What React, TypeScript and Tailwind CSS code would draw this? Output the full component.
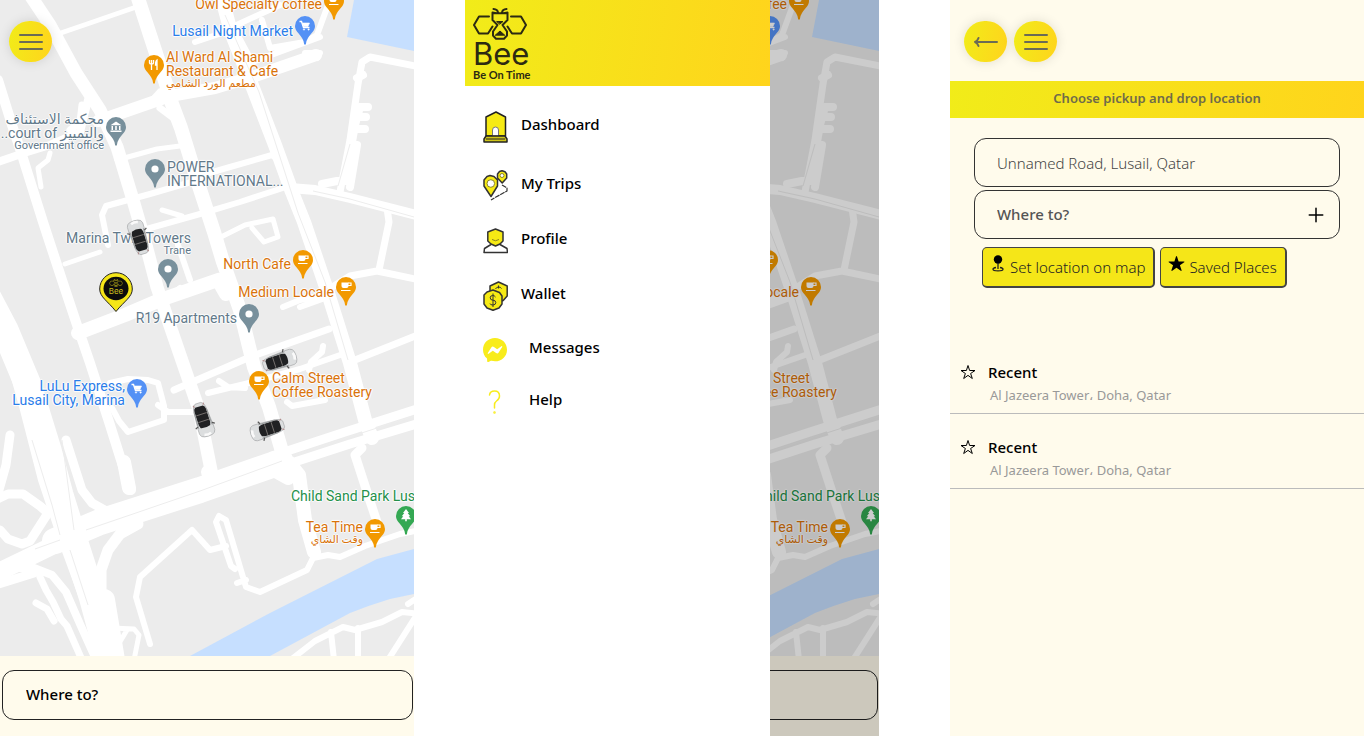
import React from "react";
import { BsMessenger } from "react-icons/bs";
import { IoAdd, IoStar, IoStarOutline } from "react-icons/io5";

const MAP_W = 414;
const MAP_H = 656;

type Glyph = "cart" | "cup" | "fork" | "bank" | "dot" | "tree";
type Line = { text: string; small?: boolean; rtl?: boolean };
type Place = {
  id: string;
  lines: Line[];
  x: number;
  y: number;
  end?: boolean;
  pin: [number, number];
  glyph: Glyph;
  tone: "orange" | "blue" | "slate" | "green";
  east?: boolean;
};

const places: Place[] = [
  { id: "owl", lines: [{ text: "Owl Specialty coffee" }], x: 322, y: -3, end: true, pin: [334, 1], glyph: "cup", tone: "orange", east: true },
  { id: "market", lines: [{ text: "Lusail Night Market" }], x: 293, y: 24, end: true, pin: [305, 26], glyph: "cart", tone: "blue", east: true },
  { id: "ward", lines: [{ text: "Al Ward Al Shami" }, { text: "Restaurant & Cafe" }, { text: "مطعم الورد الشامي", small: true, rtl: true }], x: 166, y: 50, pin: [154, 65], glyph: "fork", tone: "orange" },
  { id: "court", lines: [{ text: "محكمة الاستئناف", rtl: true }, { text: "والتمييز court of..", rtl: true }, { text: "Government office", small: true }], x: 104, y: 112, end: true, pin: [116, 127], glyph: "bank", tone: "slate" },
  { id: "power", lines: [{ text: "POWER" }, { text: "INTERNATIONAL..." }], x: 167, y: 160, pin: [155, 169], glyph: "dot", tone: "slate" },
  { id: "trane", lines: [{ text: "Marina Twin Towers" }, { text: "Trane", small: true }], x: 191, y: 231, end: true, pin: [168, 269], glyph: "dot", tone: "slate" },
  { id: "north", lines: [{ text: "North Cafe" }], x: 291, y: 257, end: true, pin: [303, 260], glyph: "cup", tone: "orange", east: true },
  { id: "medium", lines: [{ text: "Medium Locale" }], x: 334, y: 285, end: true, pin: [346, 287], glyph: "cup", tone: "orange", east: true },
  { id: "r19", lines: [{ text: "R19 Apartments" }], x: 237, y: 311, end: true, pin: [249, 314], glyph: "dot", tone: "slate" },
  { id: "lulu", lines: [{ text: "LuLu Express," }, { text: "Lusail City, Marina" }], x: 125, y: 379, end: true, pin: [137, 389], glyph: "cart", tone: "blue" },
  { id: "calm", lines: [{ text: "Calm Street" }, { text: "Coffee Roastery" }], x: 272, y: 371, pin: [259, 381], glyph: "cup", tone: "orange", east: true },
  { id: "park", lines: [{ text: "Child Sand Park Lusail" }], x: 291, y: 489, pin: [406, 516], glyph: "tree", tone: "green", east: true },
  { id: "tea", lines: [{ text: "Tea Time" }, { text: "وقت الشاي", small: true, rtl: true }], x: 363, y: 520, end: true, pin: [375, 529], glyph: "cup", tone: "orange", east: true },
];

const labelTone = {
  orange: "text-[#d9730b]",
  blue: "text-[#2b7de9]",
  slate: "text-[#62798a]",
  green: "text-[#24904a]",
};
const pinTone = { orange: "#f29900", blue: "#5491f5", slate: "#78909c", green: "#34a853" };

const roads: [number, string][] = [
  [13, "M30 -5L50 25L76 73L100 110L117 147L133 200L146 245L157 287L168 320L199 410L208 455L212 475"],
  [14, "M137 -5L150 35L168 90L172 104L181 128L197 180L214 232L223 262L240 310L254 367L269 407L283 455L299 475L305 520L314 552"],
  [14, "M221 -5L231 32L253 88L275 145L292 192L304 222L327 290L350 363L365 420L372 438"],
  [9, "M362 448L355 455L367 492L378 525"],
  [10, "M-2 80L12 125L22 155L43 222L62 280L77 325L90 363L110 425L121 460L131 490"],
  [27, "M-16 290L5 330L28 385L48 450L60 495L74 540L92 596L110 662"],
  [8, "M2 330L24 410L42 480L62 540L84 600L104 660"],
  [18, "M-8 575L50 547L100 523"],
  [26, "M55 541L100 522L200 490L275 464"],
  [9, "M270 470L350 444L420 423"],
  [9, "M272 456L345 432L420 408"],
  [5, "M52 36L90 23L142 5"],
  [12, "M98 121L147 104L170 96L215 88L255 76L316 55"],
  [6, "M195 42L237 28M230 28L280 5M235 30L252 62L320 37M262 20L270 48L305 42L317 35L328 5"],
  [6, "M305 53L320 53L317 58"],
  [8, "M-5 163L24 153L50 145L80 132L88 100"],
  [5, "M50 153L48 160L38 168L41 187"],
  [7, "M82 105L80 122L70 130M150 103L160 92M160 108L176 120"],
  [5, "M117 160L157 149L180 146"],
  [6, "M192 178L230 167L272 155L285 165"],
  [6, "M108 245L102 215L106 206L150 194L198 180"],
  [6, "M143 230L200 214L240 202L292 185"],
  [5, "M162 210L182 216M219 238L245 225L273 219L278 237L264 242L252 228"],
  [10, "M290 188L315 190L350 198L420 216"],
  [7, "M340 192L350 140L358 84L362 62L370 57L420 67"],
  [8, "M322 184L337 181L345 181L355 125L360 107M350 187L357 145M360 107L368 107M361 117L366 117M355 129L365 129M357 78L363 75"],
  [7, "M387 208L389 222L379 270M326 291L350 276L377 271L420 280"],
  [5, "M65 264L100 252"],
  [14, "M78 333L125 315L160 300L218 280L226 294"],
  [6, "M157 286L150 250M162 302L180 288M178 245L190 280"],
  [7, "M174 390L250 357L329 329M350 362L420 334"],
  [6, "M208 393L253 382L300 369L343 354M219 381L228 387L245 388M283 307L300 300L318 296M300 307L325 298"],
  [6, "M323 346L322 352L311 362L309 370M287 402L292 406L325 400"],
  [6, "M110 383L128 379L148 380L158 383L164 406L164 420L128 432L119 421L112 408M158 405L168 412L192 412"],
  [9, "M10 435L6 465L-3 497M66 440L82 490L92 503L108 512"],
  [9, "M-5 500L8 494L23 494L40 506L48 513L30 541L22 544L8 539L0 530"],
  [9, "M-5 585L18 578L34 573"],
  [8, "M-2 571L16 568L34 568L52 575L66 592L80 624L94 655"],
  [7, "M40 577L46 590L53 602L61 619L67 626L82 660M36 603L47 609L54 621"],
  [11, "M138 524L120 534L108 550L101 570L101 610L112 632"],
  [5, "M112 628L134 629L139 635L134 660M127 630L118 645L122 660"],
  [22, "M104 600L114 660"],
  [6, "M150 644L136 597L140 577L192 530L210 550L226 546"],
  [6, "M235 569L231 566L216 522L219 516L226 520L240 567L246 587L260 592L307 570L313 558L328 555L340 557L365 546L400 534L420 530M237 583L246 580"],
  [14, "M124 462L129 488M208 472L215 479L232 473M270 468L288 478"],
  [6, "M288 662L315 641L343 627L355 630L382 622L402 612L420 614M331 632L334 660M358 628L358 660M388 660L416 616M408 604L420 596"],
];

const seams = [
  "M32 440L52 505L60 535M70 550L88 605M62 440L74 530",
  "M35 549L60 540M86 530L130 515L200 491L282 461",
  "M292 456L340 440L414 416",
  "M225 15L259 92L298 213L325 282L348 360",
  "M313 191L350 199L414 217",
  "M338 186L350 144",
];

function GlyphArt({ kind }: { kind: Glyph }) {
  switch (kind) {
    case "cart":
      return (
        <g fill="none" stroke="#fff" strokeWidth="1.4">
          <path d="M5.5 6.5h2l2 6h6" />
          <path d="M8.5 8h7l-1.5 3.5h-4.5z" fill="#fff" strokeWidth=".6" />
          <circle cx="10" cy="14.5" r=".7" fill="#fff" strokeWidth=".5" />
          <circle cx="14.6" cy="14.5" r=".7" fill="#fff" strokeWidth=".5" />
        </g>
      );
    case "cup":
      return (
        <g>
          <path d="M6.5 6.5h7v3.5q0 2-2 2h-3q-2 0-2-2z" fill="#fff" />
          <path d="M13 7h3v2.5h-3M6 14.5h9.5" fill="none" stroke="#fff" strokeWidth="1.2" />
        </g>
      );
    case "fork":
      return (
        <g fill="none" stroke="#fff" strokeWidth="1.3">
          <path d="M6.5 6v3q0 1 2 1t2-1V6M8.5 6v10" />
          <path d="M14 16V6q-1.5 1-1.5 5H14" fill="#fff" />
        </g>
      );
    case "bank":
      return (
        <g fill="#fff">
          <path d="M5.5 9.2L11 5.5l5.500 3.700z" />
          <path d="M6.500 10h1.500v4h-1.500zM10.200 10h1.600v4h-1.600zM14 10h1.500v4h-1.500zM5.500 14.500h11v1.500h-11z" />
        </g>
      );
    case "tree":
      return <path d="M11 4l3 4h-1.300l2.500 3.200h-1.500l2.300 3h-4.200v2h-1.600v-2h-4.200l2.300-3h-1.500L9.300 8H8z" fill="#fff" />;
    default:
      return <circle cx="11" cy="11" r="3.600" fill="#fff" />;
  }
}

function Pin({ glyph, color }: { glyph: Glyph; color: string }) {
  return (
    <svg className="block h-[31px] w-[22px]" viewBox="0 0 22 31" aria-hidden="true">
      <path d="M11 1a10 10 0 0 1 10 10c0 5-4 7-7 12q-2 3-2.200 6.500h-1.600Q10 26 8 23C5 18 1 16 1 11A10 10 0 0 1 11 1z" fill={color} />
      <GlyphArt kind={glyph} />
    </svg>
  );
}

const at = (x: number, y: number) => ({ left: `${(x / MAP_W) * 100}%`, top: `${(y / MAP_H) * 100}%` });

const cars: [number, number, number][] = [
  [139, 238, 73],
  [279, 361, 162],
  [203, 419, -108],
  [268, 429, -18],
];

function Car({ angle }: { angle: number }) {
  return (
    <svg className="block h-10 w-10" viewBox="-20 -20 40 40" aria-hidden="true">
      <g transform={`rotate(${angle})`}>
        <path d="M-17.500 -4q.5-3.500 4-4h5l19 1.500q5 .5 6 3.500v6q-1 3-6 3.500L-8.500 8h-5q-3.500-.5-4-4-1-4 0-8z" fill="#dcdedf" stroke="#a2a4a5" strokeWidth=".6" />
        <path d="M-15.500 -3.500q-1.500 3.500 0 7" stroke="#fafafa" strokeWidth="2.500" fill="none" />
        <path d="M-8 -5l3-1h14q3 0 4 2v8q-1 2-4 2H-5l-3-1q-2-5 0-10z" fill="#202123" />
        <path d="M-2 -5.500v11M5 -5.500v11" stroke="#75706e" strokeWidth=".9" />
        <path d="M-8 -7l17 .5M-8 7l17-.5" stroke="#8f9293" strokeWidth=".8" />
        <path d="M-6 -7.500l-1.500-2.500M-6 7.500l-1.500 2.500" stroke="#555" strokeWidth="1.200" />
        <path d="M15.500 -5.500l-2 1M15.500 5.500l-2-1" stroke="#b08888" strokeWidth="1" />
      </g>
    </svg>
  );
}

function BeeMark({ className }: { className: string }) {
  return (
    <svg className={className} viewBox="0 0 54 32" fill="none" stroke="currentColor" strokeWidth="2" strokeLinejoin="round" strokeLinecap="round" aria-hidden="true">
      <path d="M16 8.500H6L1 17l5 8.500h9l4.500-7M38 8.500h10l5 8.500-5 8.500h-9l-4.500-7" />
      <path d="M19.500 4.500q1.500.8 7.500.8t7.500-.8v7.500L29.500 17l4.500 6.500v4l-3 3.200h-8l-3-3.200v-4l4.500-6.500-5-5z" />
      <path d="M20.500 1q4 .3 4.500 3.500M33.500 1q-4 .3-4.500 3.500" />
      <path d="M24 13.500h6l-3 2.500zM22.500 27l4.500-4 4.500 4z" fill="currentColor" strokeWidth="1" />
    </svg>
  );
}

function CityMap({ eastOnly = false }: { eastOnly?: boolean }) {
  const shown = eastOnly ? places.filter((p) => p.east) : places;
  return (
    <div className="relative min-h-[656px] flex-1 overflow-hidden bg-[#ececec]">
      <svg className="absolute inset-0 h-full w-full" viewBox={`0 0 ${MAP_W} ${MAP_H}`} preserveAspectRatio="none" aria-hidden="true">
        <g fill="none" stroke="#fff" strokeLinecap="round" strokeLinejoin="round">
          {roads.map(([w, d]) => (
            <path key={d} d={d} strokeWidth={w} />
          ))}
        </g>
        <g fill="none" stroke="#ededed" strokeWidth="1">
          {seams.map((d) => (
            <path key={d} d={d} />
          ))}
        </g>
        <g fill="#c6dfff">
          <path d="M354 0L347 37L414 51V0z" />
          <path d="M190 656L270 613L377 559L414 549V594L390 599Q370 605 350 613L270 656z" />
        </g>
      </svg>
      {shown.map((p) => (
        <React.Fragment key={p.id}>
          <div className="absolute -mt-[11px] -ml-[11px]" style={at(p.pin[0], p.pin[1])}>
            <Pin glyph={p.glyph} color={pinTone[p.tone]} />
          </div>
          <div
            className={`absolute flex flex-col whitespace-nowrap font-['Roboto','DejaVu_Sans',sans-serif] text-sm leading-[14px] [text-shadow:0_0_2px_#fff,1px_0_1px_#fff,-1px_0_1px_#fff,0_1px_1px_#fff,0_-1px_1px_#fff] ${labelTone[p.tone]} ${p.end ? "-translate-x-full items-end" : "items-start"}`}
            style={at(p.x, p.y)}
          >
            {p.lines.map((l) => (
              <span
                key={l.text}
                dir={l.rtl ? "rtl" : "ltr"}
                className={l.small ? (l.rtl ? "text-[11px] leading-[12px]" : "text-[11px] leading-[12px]") : ""}
              >
                {l.text}
              </span>
            ))}
          </div>
        </React.Fragment>
      ))}
      {!eastOnly &&
        cars.map(([x, y, a]) => (
          <div key={`${x}-${y}`} className="absolute -mt-5 -ml-5" style={at(x, y)}>
            <Car angle={a} />
          </div>
        ))}
      {!eastOnly && (
        <div className="absolute -mt-[17px] -ml-[17px] h-10 w-[34px]" style={at(116, 289)}>
          <svg className="absolute inset-0 h-10 w-[34px]" viewBox="0 0 34 40" aria-hidden="true">
            <path d="M17 .7C8 .7 .7 8 .7 17c0 8 8 12 16.300 22.500C25.300 29 33.300 25 33.300 17 33.300 8 26 .7 17 .7z" fill="#f5e618" stroke="#222" />
            <ellipse cx="17" cy="16.500" rx="12.500" ry="11.800" fill="#0c0c0c" />
          </svg>
          <div className="relative flex flex-col items-center pt-[7px] text-[#c9bd1c]">
            <BeeMark className="h-2 w-[14px]" />
            <span className="font-['Inter',sans-serif] text-[8px] leading-[8px]">Bee</span>
          </div>
        </div>
      )}
    </div>
  );
}

const gold = "bg-[linear-gradient(100deg,#f1ec19,#ffd41c)]";

function RoundButton({ label, children }: { label: string; children: React.ReactNode }) {
  return (
    <button
      type="button"
      aria-label={label}
      className={`flex h-[41px] w-[43px] items-center justify-center rounded-full text-[#6b6b55] shadow-[0_0_12px_rgba(0,0,0,0.12)] ${gold}`}
    >
      {children}
    </button>
  );
}

function Bars() {
  return (
    <svg className="h-[18px] w-6" viewBox="0 0 24 18" stroke="currentColor" strokeWidth="2" strokeLinecap="round" aria-hidden="true">
      <path d="M1 2h22M1 9h22M1 16h22" />
    </svg>
  );
}

function BackArrow() {
  return (
    <svg className="h-[18px] w-6" viewBox="0 0 24 18" fill="none" stroke="currentColor" strokeWidth="2" strokeLinecap="round" strokeLinejoin="round" aria-hidden="true">
      <path d="M23 9H1.500M4.500 5Q3.500 8 1 9Q3.500 10 4.500 13" />
    </svg>
  );
}

function Footer({ placeholder, label }: { placeholder: string; label: string }) {
  return (
    <footer className="h-20 bg-[#fffbec] pt-[14px] pr-px pl-[2px]">
      <input
        type="text"
        aria-label={label}
        placeholder={placeholder}
        className="h-[50px] w-full rounded-xl border border-[#222] bg-transparent px-[23px] pb-[2px] font-medium text-black placeholder:text-black placeholder:opacity-100"
      />
    </footer>
  );
}

const hexFill = "#f6ea14";

const menu: { name: string; inset?: boolean; icon: React.ReactNode }[] = [
  {
    name: "Dashboard",
    icon: (
      <svg className="h-8 w-[25px]" viewBox="0 0 25 32" fill={hexFill} stroke="#222" strokeWidth="1.500" strokeLinejoin="round" aria-hidden="true">
        <path d="M3 25V6l10-5 9.500 5v19z" />
        <path d="M9.500 25v-6q0-3 3-3t3 3v6z" fill="#fff" stroke="#777" strokeWidth="1" />
        <path d="M1 31v-3l2-3h19l2 3v3z" fill="#cfc51a" />
        <path d="M3 28h19" strokeWidth="1" />
      </svg>
    ),
  },
  {
    name: "My Trips",
    icon: (
      <svg className="h-[31px] w-[25px]" viewBox="0 0 25 31" fill={hexFill} stroke="#333" strokeWidth="1.500" strokeLinejoin="round" aria-hidden="true">
        <path d="M1 10l3-3.500 3-1 4 1L14.500 10v6L8 26.500 1 16z" />
        <circle cx="7.800" cy="13.500" r="3.800" fill="#fff" stroke="#8a8428" strokeWidth="1" />
        <path d="M14.500 4l2-2.500 2.500-.8 3 1L23.700 4v4L19.200 13 14.500 8z" />
        <circle cx="19" cy="5.500" r="2" fill="#fff" stroke="#8a8428" strokeWidth="1" />
        <path d="M19 15l5 3v3l-11 6-5 3" fill="none" strokeWidth="1.200" strokeDasharray="5 .8" />
      </svg>
    ),
  },
  {
    name: "Profile",
    icon: (
      <svg className="h-[26px] w-[25px]" viewBox="0 0 25 26" fill={hexFill} stroke="#333" strokeWidth="1.500" strokeLinejoin="round" aria-hidden="true">
        <path d="M8 16.500L1.500 20.500L1 24.500H24.500L24 20.500L17 16.500" fill="#fff" />
        <path d="M12.500 1L20 4v9l-3 3-4.500 2-4.500-2-3.200-3V4z" />
        <path d="M9 11.500q3.500 2.500 7 0" fill="none" stroke="#8a8420" strokeWidth="1" />
      </svg>
    ),
  },
  {
    name: "Wallet",
    icon: (
      <svg className="h-[30px] w-[25px]" viewBox="0 0 25 30" fill={hexFill} stroke="#333" strokeWidth="1.500" strokeLinejoin="round" aria-hidden="true">
        <path d="M15.500 1L24.200 5v10l-4 4.500-5 1.500L7 16V5z" />
        <path d="M18.500 7.500q-1-1.500-3-1.500t-3 2M15.500 4.500v3" fill="none" strokeWidth="1" />
        <path d="M10 9l6.500 2.500L19 15v8l-3 4-6 2.200L4 27 1 23v-9l3-3z" />
        <path d="M12.500 16q-1-1.500-2.800-1.500-2.500 0-2.500 2.300t2.800 2.400 2.800 2.400-2.800 2.400-3-1.500M10 12.500v13.500" fill="none" strokeWidth="1" />
      </svg>
    ),
  },
  { name: "Messages", inset: true, icon: <BsMessenger className="h-6 w-[24px] text-[#f8ec1c]" aria-hidden="true" /> },
  {
    name: "Help",
    inset: true,
    icon: (
      <svg className="h-[26px] w-[25px]" viewBox="0 0 25 26" fill="none" stroke="#f8ec1c" strokeWidth="1.500" strokeLinecap="round" aria-hidden="true">
        <path d="M6.500 6Q7 2 11.500 2q5 0 5 5 0 3-3 5-2 1.500-2 4v3" />
        <circle cx="11.500" cy="23.500" r=".5" />
      </svg>
    ),
  },
];

function Drawer() {
  return (
    <aside className="absolute inset-y-0 left-0 w-[74%] max-w-[305px] bg-white">
      <div className={`flex h-[86px] flex-col items-start px-2 pt-2 text-[#2c2a12] ${gold}`}>
        <BeeMark className="h-8 w-[54px]" />
        <span className="font-['Inter',sans-serif] text-[31px] leading-[28px]">Bee</span>
        <span className="font-['Lato',sans-serif] text-[11px] leading-[14px] font-bold">Be On Time</span>
      </div>
      <nav className="flex flex-col gap-[27px] px-[18px] pt-[25px]">
        {menu.map((m) => (
          <a key={m.name} href={`#${m.name}`} className={`flex items-center text-[15px] leading-5 font-medium text-black ${m.inset ? "gap-[21px]" : "gap-[13px]"}`}>
            <span className="flex w-[25px] shrink-0">{m.icon}</span>
            <span className="-my-1 pb-[6px]">{m.name}</span>
          </a>
        ))}
      </nav>
    </aside>
  );
}

function MapPinStand() {
  return (
    <svg className="h-[17px] w-3" viewBox="0 0 12 17" fill="none" stroke="currentColor" strokeWidth="1.300" aria-hidden="true">
      <circle cx="6" cy="4.500" r="4.200" fill="#000" stroke="none" />
      <path d="M6 8v6M4 12.500q-3 .5-3 1.700 0 1.600 5 1.600t5-1.600q0-1.200-3-1.700" />
    </svg>
  );
}

const actionClass =
  "flex h-[41px] items-start rounded-[5px] border border-[#444] border-r-2 border-b-2 bg-[#f5e618] pt-[7px] text-[15px] leading-6 font-light whitespace-nowrap text-[#222]";

function PlannerScreen() {
  return (
    <section className="flex min-w-0 flex-1 flex-col bg-[#fffbec]">
      <div className="flex gap-[7px] px-[14px] pt-[21px] pb-[19px]">
        <RoundButton label="Back">
          <BackArrow />
        </RoundButton>
        <RoundButton label="Open menu">
          <Bars />
        </RoundButton>
      </div>
      <h1 className={`flex h-[37px] items-center justify-center pb-[2px] text-[13px] font-semibold text-[#6f6b4a] ${gold}`}>Choose pickup and drop location</h1>
      <form className="flex flex-col gap-[3px] px-6 pt-5" onSubmit={(e) => e.preventDefault()}>
        <input
          type="text"
          aria-label="Pickup location"
          defaultValue="Unnamed Road, Lusail, Qatar"
          className="h-[49px] w-full rounded-xl border border-[#333] bg-transparent px-[22px] text-[15px] font-light text-[#444]"
        />
        <div className="flex h-[49px] items-center rounded-xl border border-[#333] pr-[11px] pl-[22px]">
          <input type="text" aria-label="Drop location" placeholder="Where to?" className="min-w-0 flex-1 bg-transparent text-[15px] font-medium placeholder:text-[#555] placeholder:opacity-100" />
          <button type="button" aria-label="Add stop" className="text-black">
            <IoAdd className="h-6 w-6 stroke-black stroke-[12]" />
          </button>
        </div>
        <div className="flex gap-[5px] px-2 pt-[5px]">
          <button type="button" className={`${actionClass} gap-[6px] pr-[8px] pl-[9px]`}>
            <MapPinStand />
            Set location on map
          </button>
          <button type="button" className={`${actionClass} gap-1 pr-[8px] pl-[7px]`}>
            <IoStar className="h-[17px] w-[17px] text-black" />
            Saved Places
          </button>
        </div>
      </form>
      <ul className="pt-[51px]">
        {[0, 1].map((i) => (
          <li key={i} className="flex h-[75px] items-start gap-3 border-b border-[#bbb] px-[10px] pt-[23px]">
            <IoStarOutline className="mt-[2px] h-4 w-4 shrink-0" aria-hidden="true" />
            <div>
              <p className="text-[15px] leading-5 font-medium text-black">Recent</p>
              <p className="pt-1 pl-[2px] text-[13px] leading-[18px] text-[#999]">Al Jazeera Tower، Doha, Qatar</p>
            </div>
          </li>
        ))}
      </ul>
    </section>
  );
}

export default function App() {
  return (
    <main className="flex min-h-screen w-full bg-white font-['Noto_Sans','Open_Sans',sans-serif] text-[15px]">
      <section className="relative mr-[51px] flex min-w-0 flex-1 flex-col">
        <CityMap />
        <div className="absolute top-[21px] left-[9px]">
          <RoundButton label="Open menu">
            <Bars />
          </RoundButton>
        </div>
        <Footer placeholder="Where to?" label="Destination" />
      </section>
      <section className="relative mr-[71px] flex min-w-0 flex-1 flex-col">
        <CityMap eastOnly />
        <Footer placeholder="" label="Destination behind menu" />
        <div className="absolute inset-0 bg-black/20" />
        <Drawer />
      </section>
      <PlannerScreen />
    </main>
  );
}
